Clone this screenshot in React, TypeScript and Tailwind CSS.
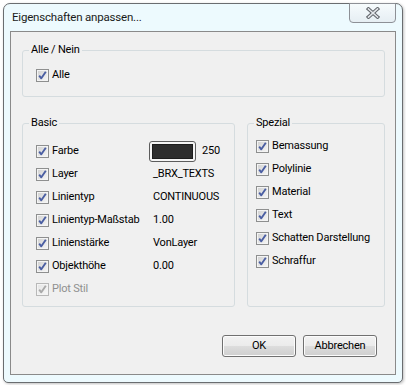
import React from 'react'

const FONT = "font-['Roboto','Liberation_Sans',sans-serif]"

function CheckBox({ disabled = false }: { disabled?: boolean }) {
  return (
    <svg width="13" height="13" viewBox="0 0 13 13" className="shrink-0">
      <defs>
        <linearGradient id={disabled ? 'cbd' : 'cb'} x1="0" y1="0" x2="1" y2="1">
          <stop offset="0" stopColor={disabled ? '#e6e6e6' : '#d3d3d3'} />
          <stop offset="1" stopColor={disabled ? '#f6f6f6' : '#f4f4f4'} />
        </linearGradient>
      </defs>
      <rect x="0.5" y="0.5" width="12" height="12" fill="#f4f4f4" stroke={disabled ? '#b8b8b8' : '#8e8f8f'} />
      <rect x="2" y="2" width="9" height="9" fill={`url(#${disabled ? 'cbd' : 'cb'})`} />
      <path
        d="M3.2 6.6 L5.3 9.3 L9.8 2.8"
        fill="none"
        stroke={disabled ? '#a9a9a9' : '#4a5ea2'}
        strokeWidth="1.9"
        strokeLinejoin="round"
      />
    </svg>
  )
}

function Check({ label, disabled = false }: { label: string; disabled?: boolean }) {
  return (
    <div className="flex items-center gap-[3px] h-[23px]">
      <CheckBox disabled={disabled} />
      <span className={disabled ? 'text-[#8f8f8f]' : 'text-black'}>{label}</span>
    </div>
  )
}

// group box with its caption sitting on the top border
function Group({ title, className, children }: { title: string; className?: string; children: React.ReactNode }) {
  return (
    <div className={`relative border border-[#d5dcdf] rounded-[3px] ${className ?? ''}`}>
      <span className="absolute left-[6px] top-[-9px] px-[2px] leading-[16px] bg-[#f0f0f0] text-black">{title}</span>
      {children}
    </div>
  )
}

const BASIC: { label: string; value?: string; swatch?: boolean; disabled?: boolean }[] = [
  { label: 'Farbe', value: '250', swatch: true },
  { label: 'Layer', value: '_BRX_TEXTS' },
  { label: 'Linientyp', value: 'CONTINUOUS' },
  { label: 'Linientyp-Maßstab', value: '1.00' },
  { label: 'Linienstärke', value: 'VonLayer' },
  { label: 'Objekthöhe', value: '0.00' },
  { label: 'Plot Stil', disabled: true },
]

const SPEZIAL = ['Bemassung', 'Polylinie', 'Material', 'Text', 'Schatten Darstellung', 'Schraffur']

function Button({ children }: { children: React.ReactNode }) {
  return (
    <button className="w-[74px] h-[22px] rounded-[3px] border border-[#707070] bg-[linear-gradient(#f2f2f2_0%,#ebebeb_50%,#dddddd_50%,#cfcfcf_100%)] shadow-[inset_0_0_0_1px_#fcfcfc] text-black">
      {children}
    </button>
  )
}

export default function App() {
  return (
    <div className={`w-[406px] h-[385px] bg-white p-[3px] text-[11px] tracking-[-0.2px] ${FONT}`}>
      <div className="relative w-[400px] h-[380px] flex flex-col rounded-t-[7px] rounded-b-[5px] border border-[#6a6d70] bg-[#edfafe] shadow-[1px_1px_3px_rgba(0,0,0,0.25)]">
        <div className="h-[27px] flex items-center pl-[8px] text-[11.5px] text-[#1a1a1a]">
          Eigenschaften anpassen...
        </div>
        <div className="absolute top-[-1px] right-[6px] w-[47px] h-[20px] flex items-center justify-center rounded-b-[4px] border border-[#8d9096] bg-[linear-gradient(#f6fbfd,#e6eef3)]">
          <svg width="14" height="12" viewBox="0 0 14 12">
            <path d="M2.5 2 L11.5 10 M11.5 2 L2.5 10" stroke="#5f6369" strokeWidth="3.6" strokeLinecap="square" />
            <path d="M2.5 2 L11.5 10 M11.5 2 L2.5 10" stroke="#e4e7eb" strokeWidth="1.6" strokeLinecap="square" />
          </svg>
        </div>

        <div className="mx-[6px] mb-[7px] h-[344px] border border-[#8a8a8a] bg-[#f0f0f0] pl-[11px] pr-[10px] pt-[18px] flex flex-col">
          <Group title="Alle / Nein" className="pl-[13px] pt-[13px] pb-[9px]">
            <Check label="Alle" />
          </Group>

          <div className="mt-[26px] flex gap-[12px]">
            <Group title="Basic" className="w-[213px] pl-[13px] pt-[16px] pb-[5px]">
              {BASIC.map((r) => (
                <div key={r.label} className="flex items-center h-[23px]">
                  <div className="w-[113px]">
                    <Check label={r.label} disabled={r.disabled} />
                  </div>
                  {r.swatch ? (
                    <div className="flex items-center gap-[6px]">
                      <div className="w-[47px] h-[21px] rounded-[3px] border border-[#5c5c5c] p-[2px] bg-[#f4f4f4]">
                        <div className="w-full h-full bg-[#2d2d2d] border border-[#1c1c1c]" />
                      </div>
                      <span>{r.value}</span>
                    </div>
                  ) : (
                    <span className="pl-[4px]">{r.value}</span>
                  )}
                </div>
              ))}
            </Group>

            <Group title="Spezial" className="w-[138px] pl-[8px] pt-[11px]">
              {SPEZIAL.map((s) => (
                <Check key={s} label={s} />
              ))}
            </Group>
          </div>

          <div className="mt-[28px] pr-[8px] flex justify-end gap-[7px]">
            <Button>OK</Button>
            <Button>Abbrechen</Button>
          </div>
        </div>
      </div>
    </div>
  )
}
